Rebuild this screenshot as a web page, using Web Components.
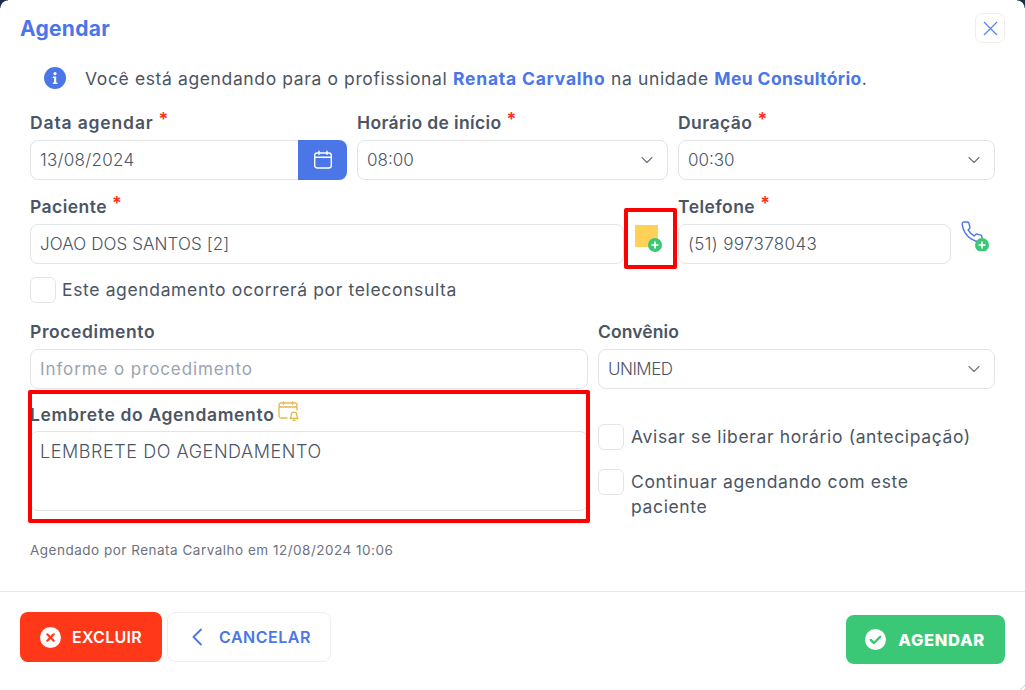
<!DOCTYPE html>
<html lang="pt-BR">
<head>
<meta charset="utf-8">
<title>Agendar</title>
<style>
  html, body { margin: 0; height: 100%; background: #fff; }
  body { font-family: "Inter", "Noto Sans", sans-serif; color: #4b5563; overflow: hidden; }
</style>
</head>
<body>
<agenda-modal></agenda-modal>

<script>
const ICONS = {
  calendar: `<svg width="20" height="20" viewBox="0 0 20 20" fill="none" stroke="#fff" stroke-width="1.4" stroke-linecap="round"><rect x="1.7" y="3" width="16.6" height="15" rx="2.5"/><path d="M1.7 7.2h16.6M6 1.2v3M14 1.2v3"/></svg>`,
  chevron: `<svg width="12" height="8" viewBox="0 0 12 8" fill="none" stroke="#6b7280" stroke-width="1.1" stroke-linecap="round" stroke-linejoin="round"><path d="M1 1.5l5 5 5-5"/></svg>`,
};

class FieldLabel extends HTMLElement {
  constructor() {
    super();
    this.attachShadow({ mode: "open" });
  }
  connectedCallback() {
    const req = this.hasAttribute("required") ? `<span class="req">*</span>` : "";
    this.shadowRoot.innerHTML = `
      <style>
        :host { display: flex; align-items: center; height: 16px; margin-bottom: 10px; font-size: 17.5px; font-weight: 600; letter-spacing: .45px; color: #4b5563; white-space: nowrap; }
        .req { color: #ff2d1a; font-size: 18px; margin-left: 5px; position: relative; top: -3px; }
      </style>
      <slot></slot>${req}<slot name="after"></slot>`;
  }
}

class TextBox extends HTMLElement {
  constructor() {
    super();
    this.attachShadow({ mode: "open" });
  }
  connectedCallback() {
    const chevron = this.hasAttribute("select") ? ICONS.chevron : "";
    this.shadowRoot.innerHTML = `
      <style>
        :host { display: flex; align-items: center; justify-content: space-between; box-sizing: border-box; height: 40px; padding: 0 9px; background: #fff; border: 1px solid #e2e4e8; border-radius: 8px; font-size: 17px; font-weight: 300; color: #4b5563; white-space: nowrap; min-width: 0; }
        :host([placeholder]) { color: #9ca3af; font-weight: 400; }
        :host([select]) { padding-right: 14px; }
        :host([joined]) { border-right: 0; border-radius: 8px 0 0 8px; flex: 1; }
      </style>
      <slot></slot>${chevron}`;
  }
}

class CheckOption extends HTMLElement {
  constructor() {
    super();
    this.attachShadow({ mode: "open" });
  }
  connectedCallback() {
    this.shadowRoot.innerHTML = `
      <style>
        :host { display: flex; gap: 7px; font-size: 17.5px; letter-spacing: .64px; line-height: 25px; color: #4b5563; }
        .box { flex: none; box-sizing: border-box; width: 26px; height: 26px; background: #fff; border: 1px solid #e2e4e8; border-radius: 6px; }
      </style>
      <span class="box"></span><span><slot></slot></span>`;
  }
}

class ActionButton extends HTMLElement {
  constructor() {
    super();
    this.attachShadow({ mode: "open" });
  }
  connectedCallback() {
    this.shadowRoot.innerHTML = `
      <style>
        :host { display: inline-flex; align-items: center; box-sizing: border-box; height: 50px; gap: 11px; padding: 0 20px; border-radius: 8px; font-size: 16px; font-weight: 600; white-space: nowrap; }
        :host([variant="danger"]) { background: #ff3819; color: #fff; letter-spacing: .3px; }
        :host([variant="ghost"]) { background: #fff; color: #4a76e8; border: 1px solid #eceef1; gap: 16px; padding: 0 19px 0 23px; letter-spacing: .5px; }
        :host([variant="success"]) { background: #3ac876; color: #fff; font-weight: 800; font-size: 16.5px; height: 49px; margin-top: 3px; gap: 12px; padding: 0 20px 0 19px; letter-spacing: .7px; }
        ::slotted(svg) { flex: none; }
      </style>
      <slot name="icon"></slot><slot></slot>`;
  }
}

class AgendaModal extends HTMLElement {
  constructor() {
    super();
    this.attachShadow({ mode: "open" });
  }
  connectedCallback() {
    this.shadowRoot.innerHTML = `
      <style>
        :host { display: block; position: relative; box-sizing: border-box; width: 1025px; height: 690px; background: #fff; overflow: hidden; }
        .corner { position: absolute; top: 0; width: 8px; height: 8px; }
        .corner.l { left: 0; background: radial-gradient(circle at 100% 100%, transparent 7px, #1c2b4a 8px); }
        .corner.r { right: 0; background: radial-gradient(circle at 0 100%, transparent 7px, #1c2b4a 8px); }
        .grip { position: absolute; right: 0; bottom: 0; width: 8px; height: 8px; background: repeating-linear-gradient(135deg, transparent 0 1.5px, #c9c9c9 1.5px 2.8px); clip-path: polygon(100% 0, 100% 100%, 0 100%); }
        header { display: flex; justify-content: space-between; align-items: center; padding: 13px 20px 0; height: 30px; }
        h1 { margin: 0; font-size: 21px; font-weight: 700; letter-spacing: .3px; color: #4a76e8; }
        .close { display: flex; align-items: center; justify-content: center; box-sizing: border-box; width: 30px; height: 30px; border: 1px solid #eceef1; border-radius: 7px; }
        .info { display: flex; align-items: center; gap: 19px; height: 22px; margin: 24px 0 0 44px; font-size: 17.5px; letter-spacing: .62px; color: #4b5563; white-space: nowrap; }
        .info b { color: #4a76e8; font-weight: 700; letter-spacing: .78px; }
        .info b + b { letter-spacing: .37px; }
        form { display: block; padding: 0 30px; }
        .row { display: flex; gap: 10px; }
        .col { display: flex; flex-direction: column; min-width: 0; flex: none; }
        .row1 { margin-top: 25px; }
        .row2 { margin-top: 18px; }
        .row3 { margin-top: 20px; }
        .date { width: 317px; }
        .time { width: 311px; }
        .dur { width: 317px; }
        .group { display: flex; }
        .cal { flex: none; display: flex; align-items: center; justify-content: center; width: 49px; height: 40px; background: #4a76e8; border-radius: 0 8px 8px 0; }
        .patient { width: 594px; }
        .note { display: flex; align-items: flex-start; flex: none; box-sizing: border-box; width: 44px; height: 40px; padding-left: 10px; align-self: flex-end; margin-left: -10px; }
        .phone { width: 273px; }
        .tel-call { display: flex; flex: none; align-self: flex-end; width: 30px; height: 30px; margin: 0 0 13px -1px; }
        .wide { width: 558px; }
        .right { width: 397px; }
        .tele { margin-top: 13px; gap: 6px; }
        .reminder-col { padding-top: 17px; }
        .reminder-col field-label { margin-bottom: 9px; letter-spacing: .65px; }
        .reminder { height: 80px; align-items: flex-start; padding-top: 8px; font-size: 18px; letter-spacing: .56px; line-height: 24px; }
        .stack { gap: 19px; padding: 35px 12px 0 0; box-sizing: border-box; }
        .audit { margin: 23px 0 0; font-size: 13.5px; letter-spacing: .5px; color: #6b7280; }
        hr { border: 0; border-top: 1px solid #e5e7eb; margin: 33px 0 0; }
        footer { display: flex; justify-content: space-between; align-items: flex-start; padding: 20px 20px 0; }
        .left { display: flex; gap: 5px; }
        .mark { position: absolute; box-sizing: border-box; border: 4px solid #ff0000; border-radius: 2px; pointer-events: none; }
        .mark.a { left: 624px; top: 208px; width: 53px; height: 61px; }
        .mark.b { left: 28px; top: 390px; width: 562px; height: 133px; }
      </style>
      <div class="corner l"></div><div class="corner r"></div>
      <header>
        <h1>Agendar</h1>
        <span class="close"><svg width="15" height="15" viewBox="0 0 15 15" stroke="#5b85ef" stroke-width="1.3" fill="none"><path d="M1 1l13 13M14 1L1 14"/></svg></span>
      </header>
      <div class="info">
        <svg width="22" height="22" viewBox="0 0 22 22" style="flex:none"><circle cx="11" cy="11" r="11" fill="#4a76e8"/><circle cx="11" cy="6.6" r="1.6" fill="#fff"/><path d="M8.8 9.4h3.4v6h1.3v1.6H8.8v-1.6h1.3v-4.4H8.8z" fill="#fff"/></svg>
        <span>Você está agendando para o profissional <b>Renata Carvalho</b> na unidade <b>Meu Consultório</b>.</span>
      </div>
      <form>
        <div class="row row1">
          <div class="col date">
            <field-label required style="letter-spacing:.85px">Data agendar</field-label>
            <div class="group"><text-box joined style="letter-spacing:.3px">13/08/2024</text-box><span class="cal">${ICONS.calendar}</span></div>
          </div>
          <div class="col time"><field-label required style="letter-spacing:.37px">Horário de início</field-label><text-box select>08:00</text-box></div>
          <div class="col dur"><field-label required>Duração</field-label><text-box select>00:30</text-box></div>
        </div>
        <div class="row row2">
          <div class="col patient"><field-label required>Paciente</field-label><text-box style="letter-spacing:.1px">JOAO DOS SANTOS [2]</text-box></div>
          <span class="note">
            <svg width="28" height="28" viewBox="0 0 28 28"><path d="M1 1h23v16l-5 6H1z" fill="#ffd257"/><path d="M24 17h-5v6z" fill="#e9edf2"/><circle cx="21" cy="21" r="7" fill="#3ac876"/><path d="M21 17.500v7M17.500 21h7" stroke="#fff" stroke-width="1.700"/></svg>
          </span>
          <div class="col phone"><field-label required>Telefone</field-label><text-box style="letter-spacing:.35px">(51) 997378043</text-box></div>
          <span class="tel-call">
            <svg width="30" height="30" viewBox="0 0 30 30" fill="none"><path transform="translate(0 -1)" d="M22 16.920v3a2 2 0 0 1-2.180 2 19.790 19.790 0 0 1-8.630-3.070 19.500 19.500 0 0 1-6-6 19.790 19.790 0 0 1-3.070-8.670A2 2 0 0 1 4.110 2h3a2 2 0 0 1 2 1.720 12.840 12.840 0 0 0 .7 2.810 2 2 0 0 1-.45 2.110L8.090 9.910a16 16 0 0 0 6 6l1.270-1.270a2 2 0 0 1 2.110-.45 12.840 12.840 0 0 0 2.810.7A2 2 0 0 1 22 16.920z" stroke="#4a76e8" stroke-width="1.400" stroke-linejoin="round"/><circle cx="22" cy="24" r="7" fill="#3ac876"/><path d="M22 20.500v7M18.500 24h7" stroke="#fff" stroke-width="1.700"/></svg>
          </span>
        </div>
        <check-option class="tele">Este agendamento ocorrerá por teleconsulta</check-option>
        <div class="row row3">
          <div class="col wide"><field-label style="letter-spacing:.6px">Procedimento</field-label><text-box placeholder style="letter-spacing:.9px">Informe o procedimento</text-box></div>
          <div class="col right"><field-label style="letter-spacing:.1px">Convênio</field-label><text-box select style="letter-spacing:-.5px">UNIMED</text-box></div>
        </div>
        <div class="row">
          <div class="col wide reminder-col">
            <field-label>Lembrete do Agendamento
              <svg slot="after" width="22" height="20" viewBox="0 0 22 20" fill="none" stroke="#e3b94f" stroke-width="1.300" stroke-linecap="round" stroke-linejoin="round" style="margin:-6px 0 0 4px;flex:none"><path d="M9 17H3a2 2 0 0 1-2-2V4a2 2 0 0 1 2-2h14a2 2 0 0 1 2 2v5M1 6h18M5.500 .7v2.600M14.500 .7v2.600"/><path d="M12 17.500c1-1 1.200-2 1.200-3.500a2.800 2.800 0 0 1 5.600 0c0 1.500.2 2.500 1.200 3.500zM15 19.300h2"/></svg>
            </field-label>
            <text-box class="reminder">LEMBRETE DO AGENDAMENTO</text-box>
          </div>
          <div class="col right stack">
            <check-option>Avisar se liberar horário (antecipação)</check-option>
            <check-option>Continuar agendando com este paciente</check-option>
          </div>
        </div>
        <p class="audit">Agendado por Renata Carvalho em 12/08/2024 10:06</p>
      </form>
      <hr>
      <footer>
        <div class="left">
          <action-button variant="danger">
            <svg slot="icon" width="21" height="21" viewBox="0 0 21 21"><circle cx="10.500" cy="10.500" r="10.500" fill="#fff"/><path d="M7.300 7.300l6.400 6.400M13.700 7.300l-6.400 6.400" stroke="#ff3819" stroke-width="2.200" stroke-linecap="round"/></svg>
            EXCLUIR
          </action-button>
          <action-button variant="ghost">
            <svg slot="icon" width="12" height="18" viewBox="0 0 12 18" fill="none" stroke="#4a76e8" stroke-width="1.800" stroke-linecap="round" stroke-linejoin="round"><path d="M10 1.500L2.500 9l7.500 7.500"/></svg>
            CANCELAR
          </action-button>
        </div>
        <action-button variant="success">
          <svg slot="icon" width="21" height="21" viewBox="0 0 21 21"><circle cx="10.500" cy="10.500" r="10.500" fill="#fff"/><path d="M5.800 11l3.200 3 6.200-6.200" fill="none" stroke="#3ac876" stroke-width="2.400" stroke-linecap="round" stroke-linejoin="round"/></svg>
          AGENDAR
        </action-button>
      </footer>
      <div class="grip"></div>
      <div class="mark a"></div>
      <div class="mark b"></div>`;
  }
}

customElements.define("field-label", FieldLabel);
customElements.define("text-box", TextBox);
customElements.define("check-option", CheckOption);
customElements.define("action-button", ActionButton);
customElements.define("agenda-modal", AgendaModal);
</script>
</body>
</html>
